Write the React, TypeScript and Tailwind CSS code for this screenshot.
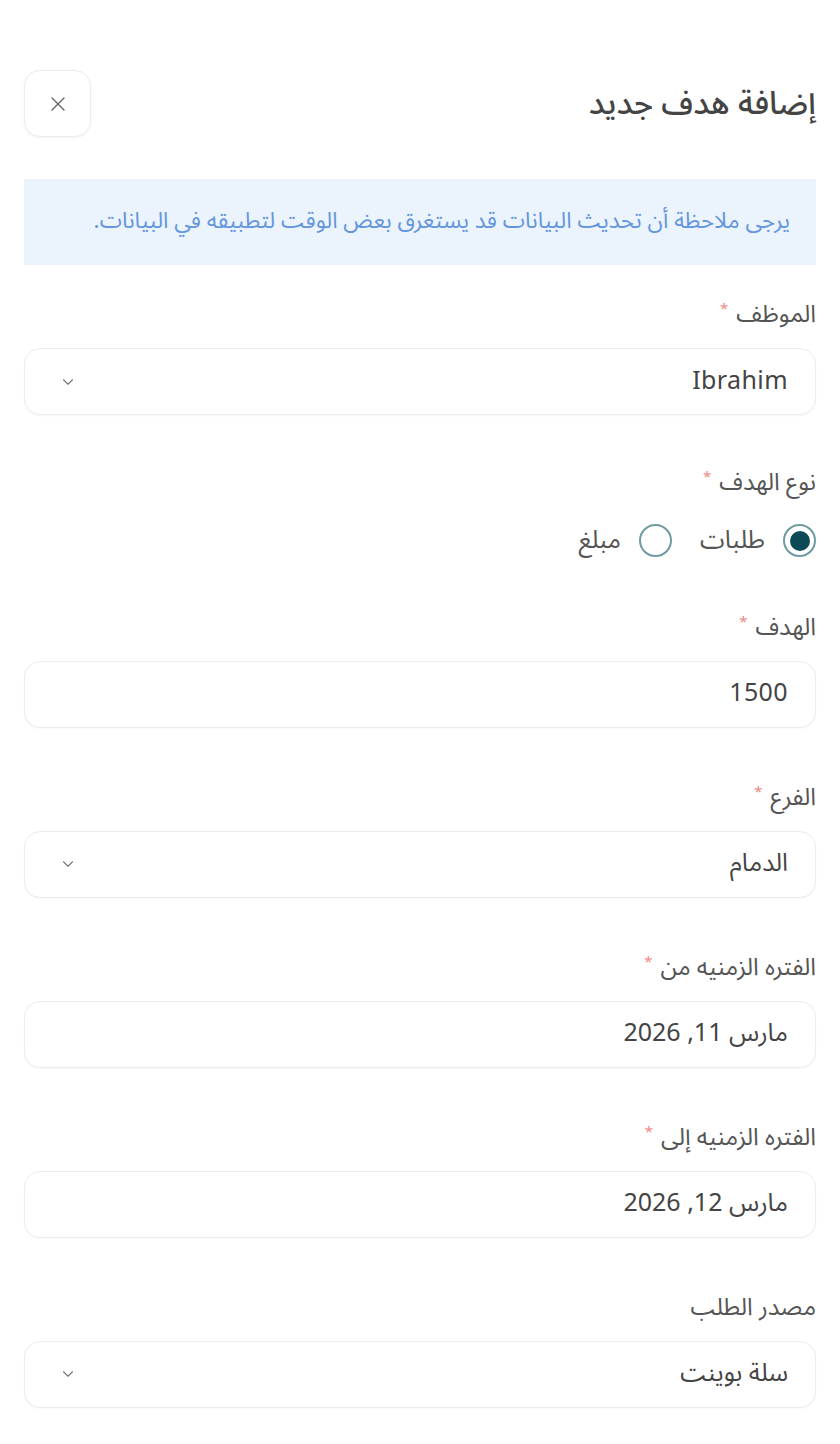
import { ChevronDown, X } from "lucide-react";

const font = "font-['Noto_Sans_Arabic','Noto_Sans','DejaVu_Sans',sans-serif]";

function Label({ text, required = true }: { text: string; required?: boolean }) {
  return (
    <div className="flex h-[30px] items-center gap-2 text-[24px] leading-[30px] text-[#555]">
      <span>{text}</span>
      {required && <span className="-mt-3 text-[15px] text-[#f08787]">*</span>}
    </div>
  );
}

function Field({ label, value, select, required = true }: { label: string; value: string; select?: boolean; required?: boolean }) {
  return (
    <div className="mb-[55px]">
      <Label text={label} required={required} />
      <div className="mt-[18px] flex h-[67px] items-center justify-between rounded-2xl border border-[#ececec] bg-white pr-[27px] pl-[34px] shadow-[0_1px_2px_rgba(0,0,0,0.03)]">
        <span className="text-[25px] tracking-[0.4px] text-[#444]">{value}</span>
        {select && <ChevronDown size={18} strokeWidth={1.5} className="text-[#777]" />}
      </div>
    </div>
  );
}

function Radio({ label, checked }: { label: string; checked?: boolean }) {
  return (
    <label className="flex items-center gap-[18px]">
      <span className="flex h-[33px] w-[33px] items-center justify-center rounded-full border-2 border-[#6f9aa1]">
        {checked && <span className="h-[20px] w-[20px] rounded-full bg-[#0c4a58]" />}
      </span>
      <span className="text-[25px] text-[#555]">{label}</span>
    </label>
  );
}

export default function App() {
  return (
    <div dir="rtl" className={`min-h-[1444px] bg-white px-[24px] pt-[70px] ${font}`}>
      {/* Header */}
      <div className="flex items-center justify-between">
        <h1 className="text-[32px] font-medium text-[#444]">إضافة هدف جديد</h1>
        <button className="flex h-[67px] w-[67px] items-center justify-center rounded-2xl border border-[#ececec] bg-white shadow-[0_1px_3px_rgba(0,0,0,0.05)]">
          <X size={24} strokeWidth={1.4} className="text-[#666]" />
        </button>
      </div>

      {/* Notice */}
      <div className="mt-[42px] flex h-[86px] items-center bg-[#ebf3fd] pr-[26px]">
        <p className="text-[22.5px] text-[#6496dd]">
          يرجى ملاحظة أن تحديث البيانات قد يستغرق بعض الوقت لتطبيقه في البيانات.
        </p>
      </div>

      <div className="mt-[35px]">
        <Field label="الموظف" value="Ibrahim" select />

        {/* Goal type */}
        <div className="mb-[53px] -mt-[2px]">
          <Label text="نوع الهدف" />
          <div className="mt-[24px] flex items-center gap-[28px]">
            <Radio label="طلبات" checked />
            <Radio label="مبلغ" />
          </div>
        </div>

        <Field label="الهدف" value="1500" />
        <Field label="الفرع" value="الدمام" select />
        <Field label="الفتره الزمنيه من" value="مارس 11, 2026" />
        <Field label="الفتره الزمنيه إلى" value="مارس 12, 2026" />
        <Field label="مصدر الطلب" value="سلة بوينت" select required={false} />
      </div>
    </div>
  );
}
